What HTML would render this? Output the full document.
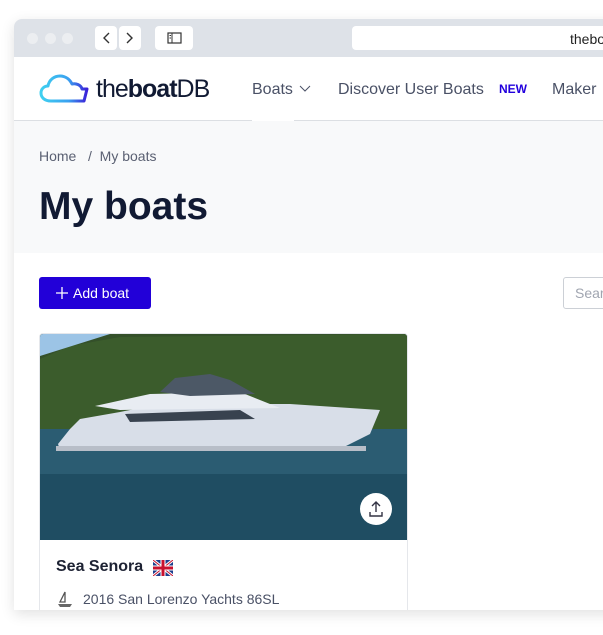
<!DOCTYPE html>
<html><head><style>
*{margin:0;padding:0;box-sizing:border-box}
body{width:603px;height:635px;background:#fff;position:relative;overflow:hidden;font-family:"Liberation Sans",sans-serif}
.win{position:absolute;left:14px;top:19px;width:620px;height:591px;background:#fff;border-radius:8px 0 0 0;box-shadow:0 4px 14px rgba(0,0,0,.12);overflow:hidden}
.bar{position:absolute;left:0;top:0;right:0;height:38px;background:#dee2e8}
.dot{position:absolute;top:14px;width:11px;height:11px;border-radius:50%;background:#eceef1}
.btn{position:absolute;top:7px;height:24px;background:#fff;border-radius:4px}
.abs{position:absolute}
</style></head><body>
<div class="win">
<div class="bar">
<div class="dot" style="left:13px"></div><div class="dot" style="left:31px"></div><div class="dot" style="left:48px"></div>
<div class="btn" style="left:81px;width:22px"></div><div class="btn" style="left:105px;width:22px"></div>
<svg class="abs" style="left:81px;top:7px" width="46" height="24"><path d="M14 7l-5 5 5 5M32 7l5 5-5 5" stroke="#333" stroke-width="1.4" fill="none"/></svg>
<div class="btn" style="left:141px;width:38px"></div>
<svg class="abs" style="left:141px;top:7px" width="38" height="24"><rect x="13" y="7" width="13" height="10" fill="none" stroke="#333" stroke-width="1.2"/><path d="M17 7v10M14.5 9.5h1.5M14.5 12h1.5" stroke="#333"/></svg>
<div class="btn" style="left:338px;width:300px"></div>
<div class="abs" style="left:556px;top:12px;font-size:14px;color:#222">thebo</div>
</div>
<div class="abs" style="left:0;top:38px;width:620px;height:64px;border-bottom:1px solid #dcdfe3;background:#fff"></div>
<svg class="abs" style="left:25px;top:54px" width="56" height="32"><defs><linearGradient id="g" x1="0" x2="1"><stop offset="0" stop-color="#3fd0f0"/><stop offset=".6" stop-color="#3aa0f0"/><stop offset="1" stop-color="#3a20d8"/></linearGradient></defs><path d="M12 28C5 28 2 24 2 20c0-4 3-7 7-7 1-6 6-10 12-10 6 0 10 4 12 8 4-1 9 1 10 5l5 0-3 12z" fill="none" stroke="url(#g)" stroke-width="3" stroke-linejoin="round"/></svg>
<div class="abs" style="left:82px;top:56px;font-size:25px;color:#111a33;letter-spacing:-1px">the<b>boat</b>DB</div>
<div class="abs" style="left:238px;top:62px;font-size:16px;color:#4a5166">Boats</div>
<svg class="abs" style="left:285px;top:65px" width="12" height="10"><path d="M1 2l5 5 5-5" stroke="#4a5166" fill="none"/></svg>
<div class="abs" style="left:324px;top:62px;font-size:16px;color:#4a5166">Discover User Boats</div>
<div class="abs" style="left:485px;top:63px;font-size:12px;font-weight:bold;color:#2200dd">NEW</div>
<div class="abs" style="left:538px;top:62px;font-size:16px;color:#4a5166">Maker</div>
<div class="abs" style="left:238px;top:101px;width:42px;height:2px;background:#fff"></div>
<div class="abs" style="left:0;top:102px;width:620px;height:132px;background:#f8f9fa"></div>
<div class="abs" style="left:25px;top:129px;font-size:14px;color:#5a6072">Home &nbsp; / &nbsp;My boats</div>
<div class="abs" style="left:25px;top:166px;font-size:39px;font-weight:bold;color:#111a33">My boats</div>
<div class="abs" style="left:25px;top:258px;width:112px;height:32px;background:#2200d8;border-radius:3px;color:#fff;font-size:14px;line-height:32px;padding-left:34px">Add boat</div>
<svg class="abs" style="left:42px;top:268px" width="12" height="12"><path d="M6 0v12M0 6h12" stroke="#fff" stroke-width="1.3"/></svg>
<div class="abs" style="left:549px;top:258px;width:80px;height:32px;border:1px solid #ccd0d6;border-radius:3px;color:#a0a5b0;font-size:14px;line-height:30px;padding-left:11px">Search</div>
<div class="abs" style="left:25px;top:314px;width:369px;height:290px;border:1px solid #e5e7eb;border-radius:4px;overflow:hidden">
<svg width="369" height="206" style="display:block">
<rect width="369" height="206" fill="#235068"/>
<rect width="369" height="100" fill="#34502a"/>
<path d="M0 25 L30 12 L80 3 L369 0 L369 98 L0 100z" fill="#3b5c2c"/>
<path d="M0 0h70L0 22z" fill="#9cc4e6"/>
<rect y="95" width="369" height="45" fill="#2b5c72"/>
<rect y="140" width="369" height="66" fill="#1f4d62"/>
<path d="M18 110 L30 95 L40 85 L80 78 L120 70 L250 70 L310 74 L340 76 L330 100 L310 110 L300 115 L20 116z" fill="#d8dee8"/>
<path d="M55 72 L110 60 L200 58 L240 74 L80 76z" fill="#e8ecf2"/>
<path d="M85 80 L200 76 L215 85 L90 88z" fill="#38424f"/>
<path d="M120 58 L135 44 L170 40 L190 46 L215 60 L150 62z" fill="#4c5866"/>
<rect x="16" y="112" width="310" height="5" fill="#b8bec8"/>
<circle cx="336" cy="175" r="16" fill="#fff"/>
<path d="M336 168v10M332 172l4-4 4 4M330 178v4h12v-4" stroke="#334" stroke-width="1.4" fill="none"/>
</svg>
<div class="abs" style="left:16px;top:224px;font-size:16px;font-weight:bold;color:#1d2233">Sea Senora</div>
<svg class="abs" style="left:113px;top:226px" width="20" height="16"><rect width="20" height="16" fill="#1c3d8c"/><path d="M0 0L20 16M20 0L0 16" stroke="#fff" stroke-width="3"/><path d="M0 0L20 16M20 0L0 16" stroke="#c8102e" stroke-width="1"/><path d="M10 0v16M0 8h20" stroke="#fff" stroke-width="5"/><path d="M10 0v16M0 8h20" stroke="#c8102e" stroke-width="3"/></svg>
<svg class="abs" style="left:16px;top:256px" width="18" height="18"><path d="M9 2L4 12h5zM9 2v10" stroke="#555" fill="none" stroke-width="1.3"/><path d="M2 14h14l-2 3H4z" fill="#666"/></svg>
<div class="abs" style="left:43px;top:257px;font-size:14px;color:#4a5166">2016 San Lorenzo Yachts 86SL</div>
</div>
</div>
</body></html>
